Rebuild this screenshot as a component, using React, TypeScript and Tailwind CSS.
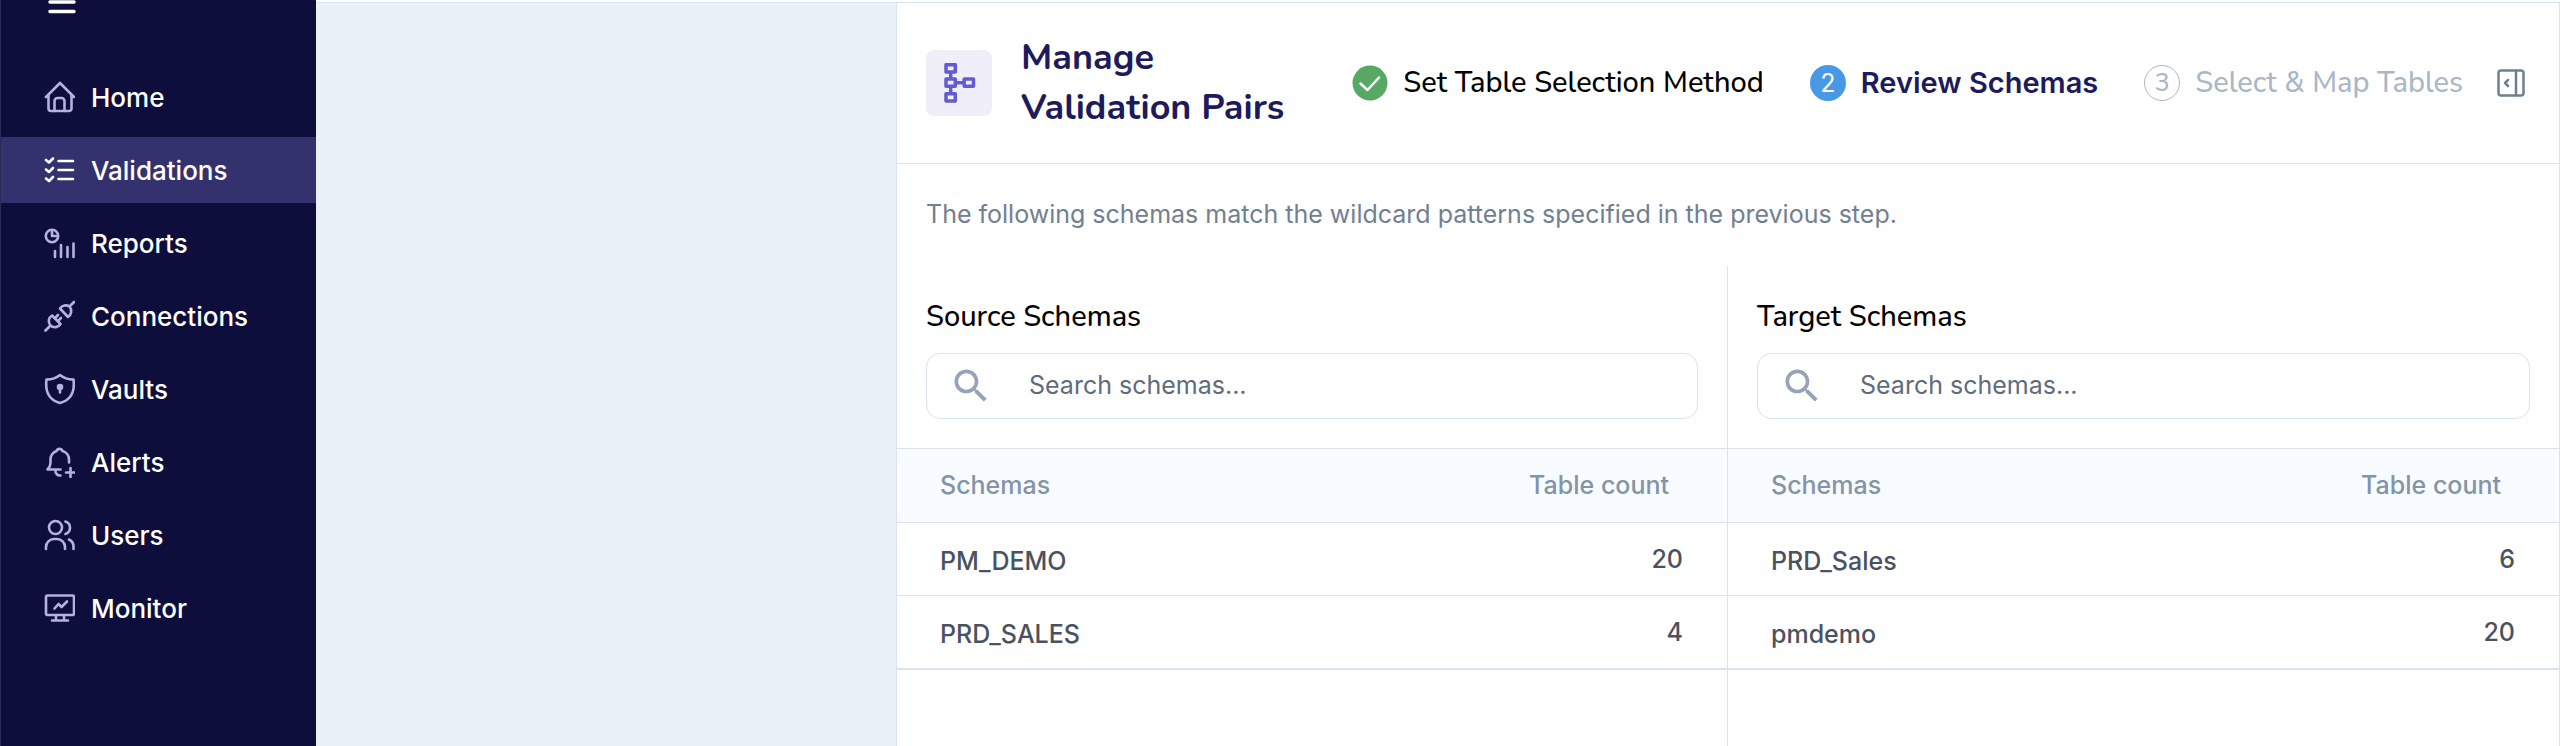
import type { ReactNode } from 'react'

type NavItem = { label: string; icon: ReactNode; active?: boolean }
type SchemaRow = { name: string; count: number }

function NavIcon({ children }: { children: ReactNode }) {
  return (
    <svg
      viewBox="0 0 32 32"
      className="size-8 shrink-0"
      fill="none"
      stroke="currentColor"
      strokeWidth="2.6"
      strokeLinecap="round"
      strokeLinejoin="round"
      aria-hidden="true"
    >
      {children}
    </svg>
  )
}

const navItems: NavItem[] = [
  {
    label: 'Home',
    icon: (
      <NavIcon>
        <path d="M3 16 17 2l14 14" />
        <path d="M5.5 14v13.5A2.5 2.5 0 0 0 8 30h18a2.5 2.5 0 0 0 2.5-2.5V14" />
        <path d="M11.5 30V20a3 3 0 0 1 3-3h4a3 3 0 0 1 3 3v10" />
      </NavIcon>
    ),
  },
  {
    label: 'Validations',
    active: true,
    icon: (
      <NavIcon>
        <path d="m3 6 3 2.5L10 4.5M3 15.5 6 18l4-4M3 24.5 6 27l4-4" />
        <path d="M15.5 7H30M15.5 16H30M15.5 25H30" />
      </NavIcon>
    ),
  },
  {
    label: 'Reports',
    icon: (
      <NavIcon>
        <circle cx="9" cy="9" r="6.2" />
        <path d="M9 4v5h5" />
        <path d="M12 24v6M18 18v12M24.5 20v10M30.5 16.5V30" />
      </NavIcon>
    ),
  },
  {
    label: 'Connections',
    icon: (
      <NavIcon>
        <path d="m2.5 30.5 4-4M31 2l-4 4" />
        <path d="M9 15.5 17.5 24a6.5 6.5 0 0 1-10 1.5 6.5 6.5 0 0 1 1.5-10Z" />
        <path d="m17 8.5 8 8.5a7 7 0 0 0 1.5-10.5 7 7 0 0 0-9.500 2Z" />
        <path d="m12 18 3-3M15 21l3-3" />
      </NavIcon>
    ),
  },
  {
    label: 'Vaults',
    icon: (
      <NavIcon>
        <path d="M17 2c3.5 3 8 4.5 13.5 4.5C32 18.5 28 27 17 30 6 27 2 18.5 3.5 6.5 9 6.5 13.5 5 17 2Z" />
        <circle cx="17" cy="14" r="2" fill="currentColor" />
        <path d="M17 15v4.5" />
      </NavIcon>
    ),
  },
  {
    label: 'Alerts',
    icon: (
      <NavIcon>
        <path d="M17.5 23.5H4.5c2-2 3-4 3-6.5v-3a9 9 0 0 1 6-9 3.2 3.2 0 0 1 6 0 9 9 0 0 1 6.5 9v2.5" />
        <path d="M12.5 24.5a4.5 4.5 0 0 0 5 5" />
        <path d="M27.5 22v9M23 26.5h9" />
      </NavIcon>
    ),
  },
  {
    label: 'Users',
    icon: (
      <NavIcon>
        <circle cx="12.5" cy="8.5" r="6.5" />
        <path d="M3 30v-2a8 8 0 0 1 8-8h3a8 8 0 0 1 8 8v2" />
        <path d="M22.5 2.5a6.6 6.6 0 0 1 0 12.500M30.5 30v-2a8 8 0 0 0-4.500-7.500" />
      </NavIcon>
    ),
  },
  {
    label: 'Monitor',
    icon: (
      <NavIcon>
        <rect x="3" y="3.5" width="28" height="19.5" rx="1.5" />
        <path d="M13 23.5V28M21 23.5V28M9 28.5h16" />
        <path d="m11.5 16.5 4-4.5 3 3 5.5-5.5" />
      </NavIcon>
    ),
  },
]

const sourceSchemas: SchemaRow[] = [
  { name: 'PM_DEMO', count: 20 },
  { name: 'PRD_SALES', count: 4 },
]

const targetSchemas: SchemaRow[] = [
  { name: 'PRD_Sales', count: 6 },
  { name: 'pmdemo', count: 20 },
]

function Sidebar() {
  return (
    <aside className="w-[316px] shrink-0 border-l border-[#2b2b57] bg-[#0e0e3d]">
      <button type="button" aria-label="Toggle menu" className="block h-16 pl-[47px]">
        <svg viewBox="0 0 28 64" className="h-16 w-7" stroke="white" strokeWidth="3.5" strokeLinecap="round" aria-hidden="true">
          <path d="M2 2h24M2 11.5h24" />
        </svg>
      </button>
      <nav className="flex flex-col gap-[7px]">
        {navItems.map((item) => (
          <a
            key={item.label}
            href="#"
            className={`flex h-[66px] items-center gap-4 pl-[42px] text-[26px] font-medium ${
              item.active ? 'bg-[#34316f] text-white' : 'text-[#b5b3dc]'
            }`}
          >
            {item.icon}
            <span className="text-white">{item.label}</span>
          </a>
        ))}
      </nav>
    </aside>
  )
}

function Steps() {
  return (
    <ol className="flex items-center gap-[46px] whitespace-nowrap text-[29px] leading-10">
      <li className="flex items-center gap-[15px] font-['Nunito','Lato',sans-serif] font-medium text-black">
        <svg viewBox="0 0 36 36" className="size-9" fill="none" aria-hidden="true">
          <circle cx="18" cy="18" r="17.5" fill="#58a865" />
          <path d="m8.5 18.5 7 6.5L27 12.5" stroke="white" strokeWidth="2.5" strokeLinecap="round" strokeLinejoin="round" />
        </svg>
        Set Table Selection Method
      </li>
      <li className="flex items-center gap-[15px] font-semibold text-[#1d1b5b]" aria-current="step">
        <span className="flex size-9 items-center justify-center rounded-full bg-[#4799e8] text-[25px] font-normal text-white">
          2
        </span>
        Review Schemas
      </li>
      <li className="flex items-center gap-[15px] font-['Nunito','Lato',sans-serif] font-medium text-[#a9b7c6]">
        <span className="flex size-9 items-center justify-center rounded-full border border-[#a9b7c6] text-[25px]">
          3
        </span>
        Select &amp; Map Tables
      </li>
    </ol>
  )
}

function PanelHeader() {
  return (
    <header className="flex items-center justify-between border-b border-[#d9e2ec] px-[29px] py-[30px]">
      <div className="flex items-center gap-[29px]">
        <span className="flex size-[66px] items-center justify-center rounded-lg bg-[#f0eef9]">
          <svg viewBox="0 0 40 40" className="size-10" fill="none" stroke="#655bd0" strokeWidth="3.5" strokeLinejoin="round" aria-hidden="true">
            <path d="M7 1.7h9.3V9H7zM7 16h9.3v7.3H7zM7 30.7h9.3V38H7zM25.2 16h9.3v7.3h-9.3z" />
            <path d="M11.7 9v7M11.7 23.3v7.4M16.3 19.7h8.9" />
          </svg>
        </span>
        <h1 className="w-[290px] font-['Nunito','Lato',sans-serif] text-4xl leading-[50px] font-bold text-[#1d1b5b]">
          Manage Validation Pairs
        </h1>
      </div>
      <div className="flex items-center gap-[34px]">
        <Steps />
        <button type="button" aria-label="Collapse panel" className="pr-[5px]">
          <svg viewBox="0 0 28 28" className="size-7" fill="none" stroke="#6f7f90" strokeWidth="2.5" strokeLinecap="round" strokeLinejoin="round" aria-hidden="true">
            <rect x="1.5" y="1.5" width="25" height="25" rx="2.5" />
            <path d="M19 2v24M11 11l-3 3 3 3" />
          </svg>
        </button>
      </div>
    </header>
  )
}

function SchemaSection({ title, rows }: { title: string; rows: SchemaRow[] }) {
  const inputId = title.toLowerCase().replace(' ', '-')
  return (
    <section className="border-[#d9e2f0] first:border-r">
      <div className="px-[29px] pt-[31px] pb-[29px]">
        <label
          htmlFor={inputId}
          className="block pb-4 font-['Nunito','Lato',sans-serif] text-[29px] leading-10 font-medium text-black"
        >
          {title}
        </label>
        <div className="flex h-[66px] items-center rounded-[14px] border border-[#d9e2f0] pl-[22px]">
          <svg viewBox="0 0 24 24" className="size-11 shrink-0" fill="#94a3b8" aria-hidden="true">
            <path d="M15.5 14h-.79l-.28-.27C15.41 12.59 16 11.11 16 9.5 16 5.91 13.09 3 9.5 3S3 5.91 3 9.5 5.91 16 9.5 16c1.61 0 3.09-.59 4.23-1.57l.27.28v.79l5 4.99L20.49 19l-4.99-5zm-6 0C7.01 14 5 11.99 5 9.5S7.01 5 9.5 5 14 7.01 14 9.5 11.99 14 9.5 14z" />
          </svg>
          <input
            id={inputId}
            type="text"
            placeholder="Search schemas..."
            className="ml-9 min-w-0 flex-1 bg-transparent pr-6 text-[25px] outline-none placeholder:text-[#5f6c7b]"
          />
        </div>
      </div>
      <table className="w-full border-y border-[#d9e2f0] text-[25px] leading-9 font-medium">
        <thead className="bg-[#f8fbff] text-[#8494a7]">
          <tr className="border-b border-[#d9e2f0]">
            <th className="pt-[18px] pb-[19px] pl-[43px] text-left font-medium">Schemas</th>
            <th className="pt-[18px] pr-[58px] pb-[19px] text-right font-medium">Table count</th>
          </tr>
        </thead>
        <tbody className="text-[#4a5260]">
          {rows.map((row) => (
            <tr key={row.name} className="border-b border-[#d9e2f0] last:border-b-2">
              <td className="pt-5 pb-4 pl-[43px]">{row.name}</td>
              <td className="py-[18px] pr-11 text-right">{row.count}</td>
            </tr>
          ))}
        </tbody>
      </table>
    </section>
  )
}

export default function App() {
  return (
    <div className="flex min-h-screen bg-white font-['Inter',sans-serif]">
      <Sidebar />
      <div className="flex flex-1 flex-col pt-[2px]">
        <div className="flex flex-1 border-t border-[#d9e2f0] bg-[#eaf1f9]">
          <main className="ml-auto flex w-[65vw] flex-col border-x border-[#d9e2f0] bg-white">
            <PanelHeader />
            <p className="px-[29px] pt-8 pb-[34px] text-[25px] leading-9 text-[#718091]">
              The following schemas match the wildcard patterns specified in the previous step.
            </p>
            <div className="grid flex-1 grid-cols-2">
              <SchemaSection title="Source Schemas" rows={sourceSchemas} />
              <SchemaSection title="Target Schemas" rows={targetSchemas} />
            </div>
          </main>
        </div>
      </div>
    </div>
  )
}
